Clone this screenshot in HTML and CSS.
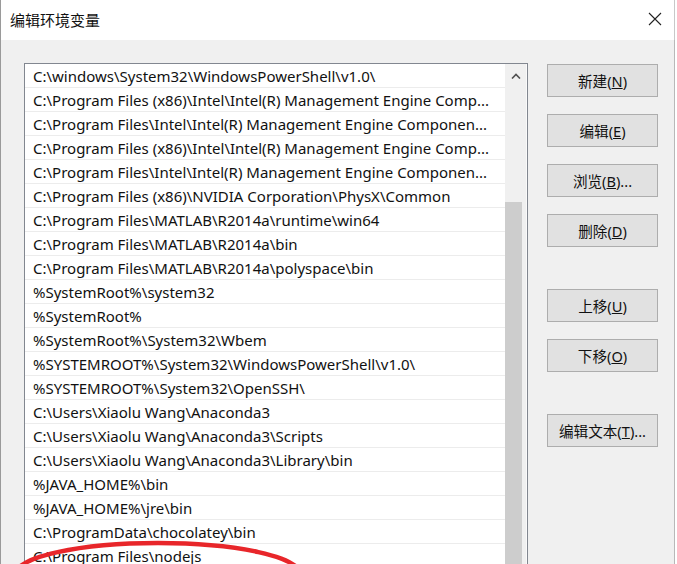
FILE: index.html
```html
<!DOCTYPE html>
<html lang="zh-CN">
<head>
<meta charset="utf-8">
<title>编辑环境变量</title>
<link rel="stylesheet" href="styles.css">
</head>
<body>
<div class="window">
  <div class="titlebar">
    <span class="title">编辑环境变量</span>
    <svg class="close" width="14" height="14" viewBox="0 0 14 14"><path d="M1 1 L13 13 M13 1 L1 13" stroke="#222" stroke-width="1.1" fill="none"/></svg>
  </div>
  <div class="content">
    <div class="listbox">
      <div class="rows">
        <div class="row">C:\windows\System32\WindowsPowerShell\v1.0\</div>
        <div class="row">C:\Program Files (x86)\Intel\Intel(R) Management Engine Comp...</div>
        <div class="row">C:\Program Files\Intel\Intel(R) Management Engine Componen...</div>
        <div class="row">C:\Program Files (x86)\Intel\Intel(R) Management Engine Comp...</div>
        <div class="row">C:\Program Files\Intel\Intel(R) Management Engine Componen...</div>
        <div class="row">C:\Program Files (x86)\NVIDIA Corporation\PhysX\Common</div>
        <div class="row">C:\Program Files\MATLAB\R2014a\runtime\win64</div>
        <div class="row">C:\Program Files\MATLAB\R2014a\bin</div>
        <div class="row">C:\Program Files\MATLAB\R2014a\polyspace\bin</div>
        <div class="row">%SystemRoot%\system32</div>
        <div class="row">%SystemRoot%</div>
        <div class="row">%SystemRoot%\System32\Wbem</div>
        <div class="row">%SYSTEMROOT%\System32\WindowsPowerShell\v1.0\</div>
        <div class="row">%SYSTEMROOT%\System32\OpenSSH\</div>
        <div class="row">C:\Users\Xiaolu Wang\Anaconda3</div>
        <div class="row">C:\Users\Xiaolu Wang\Anaconda3\Scripts</div>
        <div class="row">C:\Users\Xiaolu Wang\Anaconda3\Library\bin</div>
        <div class="row">%JAVA_HOME%\bin</div>
        <div class="row">%JAVA_HOME%\jre\bin</div>
        <div class="row">C:\ProgramData\chocolatey\bin</div>
        <div class="row">C:\Program Files\nodejs</div>
      </div>
      <div class="scrollbar">
        <div class="arrow"><svg width="10" height="6" viewBox="0 0 10 6"><path d="M1 5.5 L5 1.5 L9 5.5" stroke="#505050" stroke-width="1.6" fill="none"/></svg></div>
        <div class="track"><div class="thumb"></div></div>
      </div>
    </div>
    <div class="buttons">
      <button class="btn">新建(<u>N</u>)</button>
      <button class="btn">编辑(<u>E</u>)</button>
      <button class="btn">浏览(<u>B</u>)...</button>
      <button class="btn">删除(<u>D</u>)</button>
      <button class="btn gap">上移(<u>U</u>)</button>
      <button class="btn">下移(<u>O</u>)</button>
      <button class="btn gap">编辑文本(<u>T</u>)...</button>
    </div>
  </div>
  <svg class="mark" width="677" height="564" viewBox="0 0 677 564"><ellipse cx="157" cy="574" rx="142" ry="31" fill="none" stroke="#e8262a" stroke-width="4.5"/></svg>
</div>
</body>
</html>
```
FILE: styles.css
```css
html, body {
  margin: 0;
  padding: 0;
  background: #ffffff;
  overflow: hidden;
}
.window {
  position: relative;
  width: 677px;
  height: 564px;
  overflow: hidden;
  box-sizing: border-box;
  border-left: 1px solid #9a9a9a;
  font-family: "Noto Sans", "Noto Sans CJK SC", sans-serif;
  color: #000;
}
.titlebar {
  height: 40px;
  background: #ffffff;
  display: flex;
  align-items: center;
  justify-content: space-between;
  padding: 0 12px 0 9px;
  box-sizing: border-box;
  border-right: 1px solid #c8c8c8;
  margin-right: 2px;
}
.title {
  font-size: 15px;
  font-family: "Noto Sans CJK SC", sans-serif;
  color: #111;
  margin-top: -2px;
}
.close {
  margin-top: -2px;
}
.content {
  background: #f0f0f0;
  height: 524px;
  display: flex;
  align-items: flex-start;
  padding: 23px 0 0 23px;
  box-sizing: border-box;
  border-right: 1px solid #b8b8b8;
  margin-right: 2px;
}
.listbox {
  width: 504px;
  height: 540px;
  flex: none;
  box-sizing: border-box;
  border: 1px solid #828790;
  background: #ffffff;
  display: flex;
}
.rows {
  width: 480px;
  flex: none;
}
.row {
  height: 24px;
  box-sizing: border-box;
  border-bottom: 1px solid #ececec;
  padding-left: 8px;
  font-size: 15px;
  line-height: 24px;
  white-space: nowrap;
  overflow: hidden;
  color: #111;
}
.scrollbar {
  width: 21px;
  flex: none;
  background: #f0f0f0;
  display: flex;
  flex-direction: column;
  border-right: 1px solid #fafafa;
}
.arrow {
  height: 24px;
  display: flex;
  align-items: center;
  justify-content: center;
}
.track {
  flex: 1;
  padding-top: 115px;
}
.thumb {
  width: 17px;
  height: 400px;
  background: #cdcdcd;
}
.buttons {
  display: flex;
  flex-direction: column;
  gap: 17px;
  margin-left: 19px;
  padding-top: 1px;
}
.btn {
  width: 111px;
  height: 33px;
  background: #e1e1e1;
  border: 1px solid #adadad;
  border-radius: 0;
  font-family: "Noto Sans", "Noto Sans CJK SC", sans-serif;
  font-size: 14.6px;
  color: #111;
  padding: 0;
  margin: 0;
}
.btn.gap {
  margin-top: 25px;
}
.mark {
  position: absolute;
  left: 0;
  top: 0;
  pointer-events: none;
}
```
